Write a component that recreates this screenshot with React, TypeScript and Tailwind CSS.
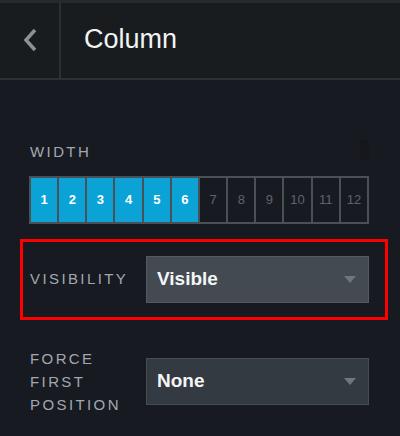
import { useState } from 'react'

const cols = [1, 2, 3, 4, 5, 6, 7, 8, 9, 10, 11, 12]

function Caret() {
  return (
    <svg width="12" height="7" viewBox="0 0 12 7" className="shrink-0">
      <path d="M0 0 L12 0 L6 7 Z" fill="#6f767e" />
    </svg>
  )
}

function Select({ value, dark }: { value: string; dark?: boolean }) {
  return (
    <div
      className={`flex h-[47px] w-[223px] items-center justify-between border pl-[10px] pr-[12px] ${
        dark ? 'border-[#464c54] bg-[#343a41]' : 'border-[#535a62] bg-[#434a52]'
      }`}
    >
      <span className="text-[19px] font-bold text-[#f4f5f6]">{value}</span>
      <Caret />
    </div>
  )
}

export default function App() {
  const [span] = useState(6)

  return (
    <div className="h-[436px] w-[400px] overflow-hidden bg-[#181a21] font-['Liberation_Sans',Arial,sans-serif]">
      {/* header */}
      <div className="h-[3px] bg-[#262930]" />
      <div className="flex h-[75px] bg-[#191c1f]">
        <div className="flex w-[59px] items-center justify-center">
          <svg width="16" height="24" viewBox="0 0 16 24" className="mb-[2px]">
            <path d="M13 2 L4 12 L13 22" fill="none" stroke="#8c9197" strokeWidth="3.5" />
          </svg>
        </div>
        <div className="w-[2px] bg-[#2c2f35]" />
        <div className="flex items-center pb-[2px] pl-[23px] text-[27px] text-[#f2f3f4]">Column</div>
      </div>
      <div className="h-[2px] bg-[#2e3138]" />

      {/* body */}
      <div className="flex items-end justify-between pl-[30px] pr-[31px] pt-[60px]">
        <div className="text-[15px] leading-[20px] tracking-[0.16em] text-[#a2a8b0]">WIDTH</div>
        <div className="mb-[2px] h-[20px] w-[9px] bg-[#15171c]" />
      </div>

      <div className="ml-[29px] mt-[14px] grid w-[340px] grid-cols-12 gap-[2px] bg-[#4a5058] p-[2px]">
        {cols.map((c) => (
          <div
            key={c}
            className={`flex h-[44px] items-center justify-center text-[13px] ${
              c <= span ? 'bg-[#0ba3d6] font-bold text-white' : 'bg-[#181a21] text-[#5d636b]'
            }`}
          >
            {c}
          </div>
        ))}
      </div>

      <div className="ml-[20px] mt-[15px] flex h-[81px] w-[368px] items-center border-[3px] border-[#ff0000] pl-[7px]">
        <div className="w-[116px] text-[15px] tracking-[0.16em] text-[#a2a8b0]">VISIBILITY</div>
        <Select value="Visible" />
      </div>

      <div className="ml-[30px] mt-[27px] flex items-center">
        <div className="w-[116px] text-[15px] leading-[23px] tracking-[0.16em] text-[#a2a8b0]">
          FORCE
          <br />
          FIRST
          <br />
          POSITION
        </div>
        <Select value="None" dark />
      </div>
    </div>
  )
}
